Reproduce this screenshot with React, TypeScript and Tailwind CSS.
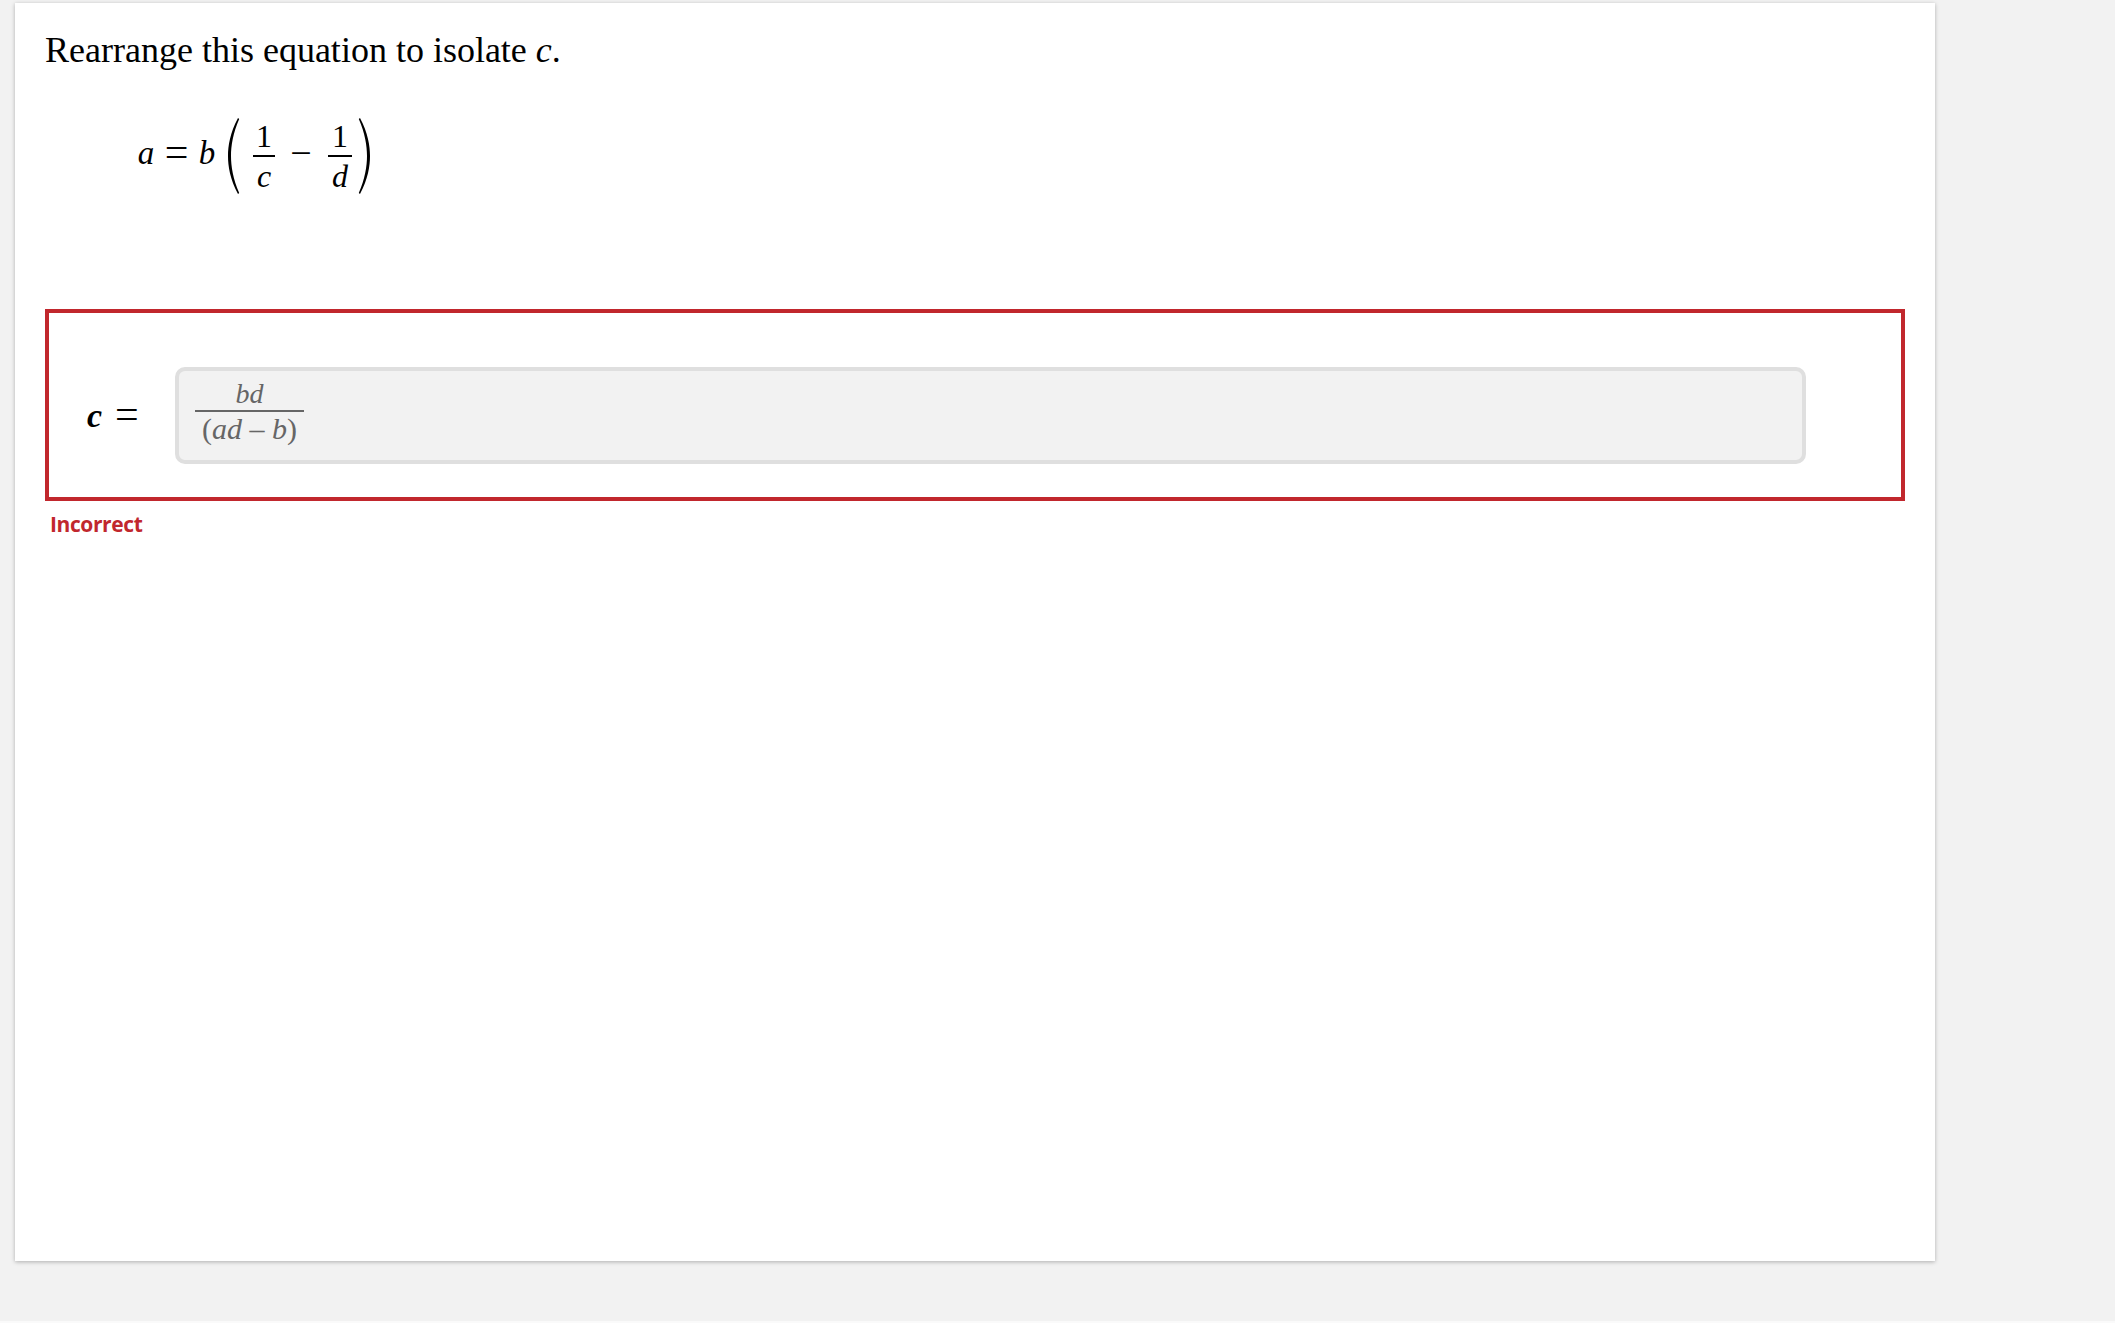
import React from "react";

const serif = { fontFamily: '"Liberation Serif", "Times New Roman", serif' };

function LParen() {
  return (
    <svg width="14" height="76" viewBox="0 0 14 76" className="block">
      <path d="M12 0 C4 15 2 28 2 38 C2 48 4 61 12 76 L13.2 75 C7 61 5 48 5 38 C5 28 7 15 13.2 1 Z" fill="#000" />
    </svg>
  );
}

function RParen() {
  return (
    <svg width="14" height="76" viewBox="0 0 14 76" className="block">
      <path d="M2 0 C10 15 12 28 12 38 C12 48 10 61 2 76 L0.8 75 C7 61 9 48 9 38 C9 28 7 15 0.8 1 Z" fill="#000" />
    </svg>
  );
}

function EqFrac({ den, w }: { den: string; w: string }) {
  return (
    <span className={`flex flex-col items-center ${w}`}>
      <span className="block text-[32px] leading-[32px]">1</span>
      <span className="block mt-[3px] h-[2px] w-full bg-black" />
      <span className="block mt-[3px] text-[32px] leading-[32px] italic">{den}</span>
    </span>
  );
}

export default function App() {
  return (
    <div className="w-full h-[1323px] bg-[#f2f2f2] border-b-[2px] border-[#fafafa] pt-[3px] pl-[15px]" style={serif}>
      <div className="w-[1920px] h-[1258px] bg-white shadow-[0_1px_4px_rgba(0,0,0,0.28)] pl-[30px] pt-[29px] flex flex-col">
        <div className="text-[36px] leading-[36px] text-black">
          Rearrange this equation to isolate <span className="italic">c</span>.
        </div>

        <div className="ml-[89px] mt-[48px] h-[80px] flex items-center text-black">
          <span className="block w-[24px] text-center text-[33px] leading-[33px] pb-[6px] italic">a</span>
          <span className="block ml-[6px] w-[25px] text-center text-[42px] leading-[42px] pb-[8px]">=</span>
          <span className="block ml-[5px] w-[26px] text-center text-[33px] leading-[33px] pb-[6px] italic">b</span>
          <span className="block ml-[6px]"><LParen /></span>
          <span className="block ml-[13px]"><EqFrac den="c" w="w-[22px]" /></span>
          <span className="block ml-[14px] w-[24px] text-center text-[38px] leading-[38px] pb-[7px]">−</span>
          <span className="block ml-[15px]"><EqFrac den="d" w="w-[24px]" /></span>
          <span className="block ml-[6px]"><RParen /></span>
        </div>

        <div className="mt-[113px] w-[1860px] h-[192px] border-[4px] border-[#c1272d] pt-[54px] pl-[38px] flex items-start">
          <div className="w-[88px] h-[97px] flex items-center">
            <span className="block text-[34px] leading-[34px] italic font-bold text-black">c</span>
            <span className="block ml-[13px] text-[42px] leading-[42px] pb-[3px] text-black">=</span>
          </div>
          <div className="w-[1631px] h-[97px] rounded-[10px] border-[4px] border-[#dfdfdf] bg-[#f2f2f2] pl-[16px] pt-[9px]">
            <div className="w-[109px] flex flex-col items-center text-[#666666]">
              <span className="block text-[28px] leading-[28px] italic">bd</span>
              <span className="block mt-[2px] h-[2px] w-full bg-[#666666]" />
              <span className="block mt-[2px] text-[30px] leading-[30px] whitespace-nowrap">
                (<span className="italic">ad</span> – <span className="italic">b</span>)
              </span>
            </div>
          </div>
        </div>

        <div
          className="mt-[12px] ml-[5px] text-[21px] leading-[22px] font-bold tracking-[-0.4px] text-[#c1272d]"
          style={{ fontFamily: '"Open Sans", "Noto Sans", sans-serif' }}
        >
          Incorrect
        </div>
      </div>
    </div>
  );
}
